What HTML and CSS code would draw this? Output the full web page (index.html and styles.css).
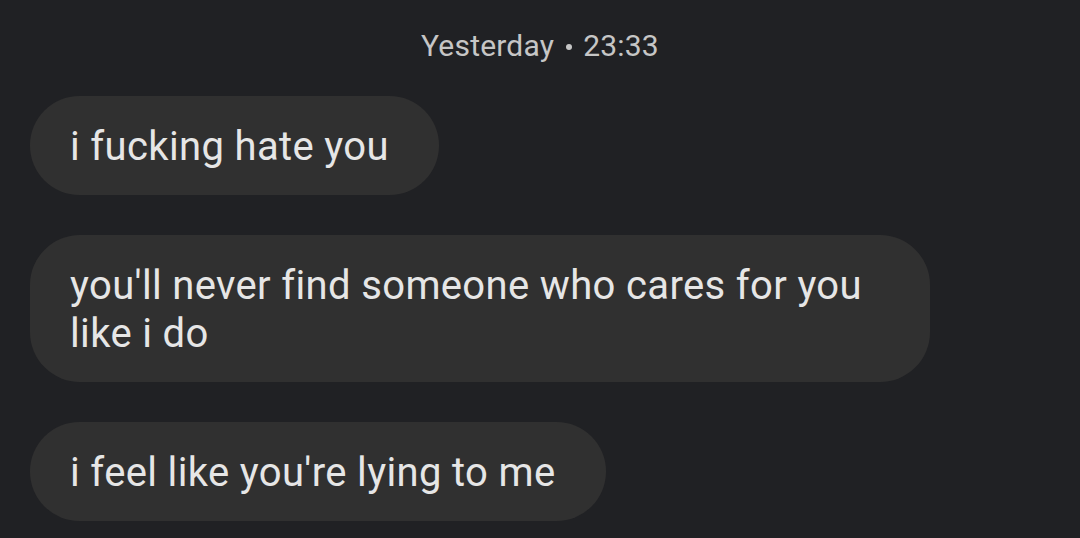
FILE: index.html
```html
<!DOCTYPE html>
<html>
<head>
<meta charset="utf-8">
<link rel="stylesheet" href="styles.css">
</head>
<body>
<div class="thread">
  <div class="stamp">Yesterday<span class="dot"></span>23:33</div>
  <div class="msgs">
    <div class="bubble">i fucking hate you</div>
    <div class="bubble">you'll never find someone who cares for you like i do</div>
    <div class="bubble">i feel like you're lying to me</div>
  </div>
</div>
</body>
</html>
```
FILE: styles.css
```css
html, body {
  margin: 0;
  padding: 0;
  background: #202124;
  height: 100%;
  overflow: hidden;
}
.thread {
  display: flex;
  flex-direction: column;
  padding: 26px 30px 0 30px;
  font-family: Roboto, "Noto Sans", sans-serif;
}
.stamp {
  display: flex;
  justify-content: center;
  align-items: center;
  color: #c6c6c6;
  font-size: 30px;
  line-height: 40px;
  letter-spacing: 0.2px;
}
.dot {
  width: 6px;
  height: 6px;
  border-radius: 50%;
  background: #c6c6c6;
  margin: 2px 11px 0 12px;
}
.msgs {
  display: flex;
  flex-direction: column;
  align-items: flex-start;
  gap: 40px;
  margin-top: 30px;
}
.bubble {
  background: #303030;
  color: #e6e6e6;
  font-size: 40px;
  line-height: 48px;
  padding: 27px 50px 24px 40px;
  border-radius: 50px;
  max-width: 810px;
  letter-spacing: 0.35px;
}
```
